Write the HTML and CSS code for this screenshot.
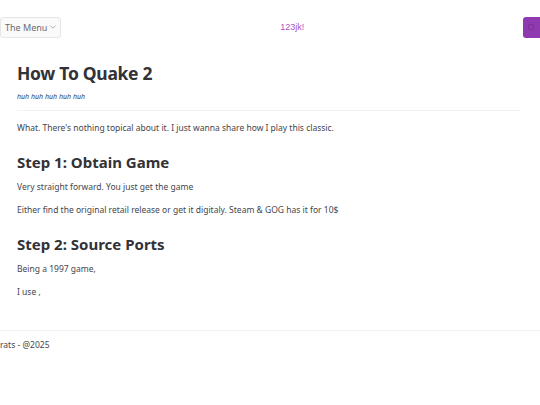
FILE: index.html
```html
<!DOCTYPE html>
<html>
<head>
<meta charset="utf-8">
<link rel="stylesheet" href="styles.css">
</head>
<body>
<header class="navbar">
  <button class="menu-btn">The Menu <svg class="chev" width="6" height="4" viewBox="0 0 6 4"><path d="M0.5 0.8 L3 3.2 L5.5 0.8" fill="none" stroke="#999" stroke-width="0.8"/></svg></button>
  <div class="brand">123jk!</div>
  <button class="theme-btn"><svg width="8" height="8" viewBox="0 0 8 8"><rect x="1.5" y="1.5" width="5" height="5" rx="1" fill="none" stroke="#7d2f9a" stroke-width="1"/></svg></button>
</header>
<main class="content">
  <h1 class="title">How To Quake 2</h1>
  <p class="subtitle">huh huh huh huh huh</p>
  <hr class="divider">
  <p class="text">What. There's nothing topical about it. I just wanna share how I play this classic.</p>
  <h2 class="step">Step 1: Obtain Game</h2>
  <p class="text">Very straight forward. You just get the game</p>
  <p class="text">Either find the original retail release or get it digitaly. Steam &amp; GOG has it for 10$</p>
  <h2 class="step">Step 2: Source Ports</h2>
  <p class="text">Being a 1997 game,</p>
  <p class="text">I use ,</p>
</main>
<footer class="footer">
  <p class="foot-text">rats - @2025</p>
</footer>
</body>
</html>
```
FILE: styles.css
```css
html, body {
  margin: 0;
  padding: 0;
  background: #ffffff;
  font-family: "Noto Sans", "Open Sans", sans-serif;
  color: #3a3a3f;
}
.navbar {
  display: flex;
  align-items: center;
  justify-content: space-between;
  padding-top: 17px;
  height: 20px;
}
.menu-btn {
  display: flex;
  align-items: center;
  gap: 3px;
  height: 21px;
  padding: 0 4px 0 4px;
  background: #fafafa;
  border: 1px solid #e6e6e6;
  border-radius: 3px;
  font-family: "Noto Sans", sans-serif;
  font-size: 9px;
  color: #6b6b70;
}
.brand {
  font-family: "Liberation Sans", Arial, sans-serif;
  font-size: 9px;
  color: #a954c8;
}
.theme-btn {
  width: 17px;
  height: 21px;
  padding: 0;
  border: none;
  border-radius: 3px 0 0 3px;
  background: #8f3ab0;
  display: flex;
  align-items: center;
  justify-content: center;
}
.content {
  padding: 0 20px 0 17px;
}
.title {
  margin: 22px 0 0;
  font-size: 17.5px;
  letter-spacing: -0.3px;
  font-weight: 700;
  line-height: 28px;
  color: #323237;
}
.subtitle {
  margin: 5px 0 0;
  font-size: 7px;
  font-style: italic;
  color: #333333;
  opacity: 0.99;
}
.divider {
  border: none;
  border-top: 1px solid #f2f2f2;
  margin: 9px 0 0;
}
.text {
  font-size: 8.5px;
  line-height: 12px;
  margin: 11px 0 0;
  color: #45454a;
}
.step {
  margin: 20px 0 0;
  font-size: 15px;
  line-height: 16px;
  font-weight: 700;
  color: #323237;
}
.footer {
  margin-top: 32px;
  border-top: 1px solid #f2f2f2;
}
.foot-text {
  margin: 8px 0 0;
  font-size: 8.5px;
  color: #45454a;
}
```
